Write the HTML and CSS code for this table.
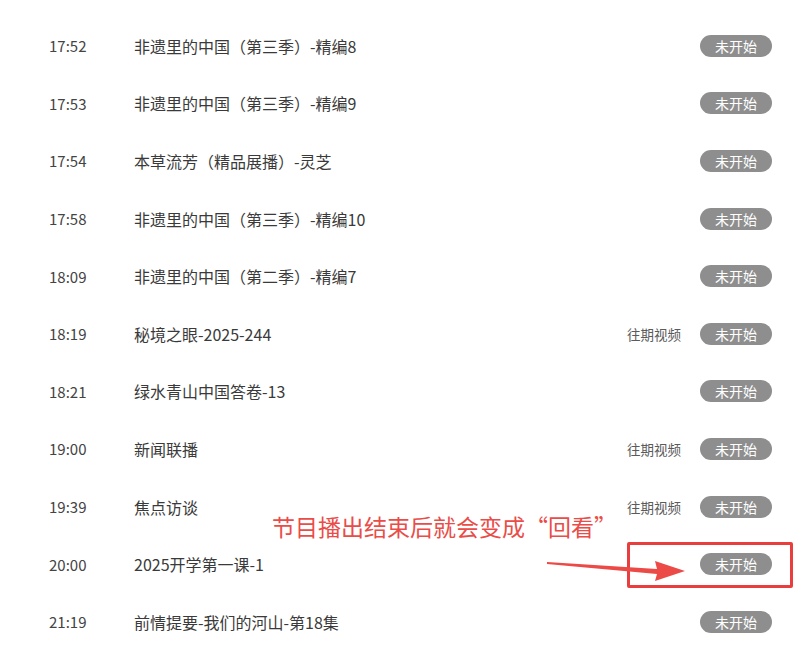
FILE: index.html
```html
<!DOCTYPE html>
<html lang="zh-CN">
<head>
<meta charset="utf-8">
<title>节目单</title>
<link rel="stylesheet" href="styles.css">
</head>
<body>
<div class="page">
  <ul class="schedule">
    <li class="row"><span class="time">17:52</span><span class="title">非遗里的中国（第三季）-精编8</span><span class="status">未开始</span></li>
    <li class="row"><span class="time">17:53</span><span class="title">非遗里的中国（第三季）-精编9</span><span class="status">未开始</span></li>
    <li class="row"><span class="time">17:54</span><span class="title">本草流芳（精品展播）-灵芝</span><span class="status">未开始</span></li>
    <li class="row"><span class="time">17:58</span><span class="title">非遗里的中国（第三季）-精编10</span><span class="status">未开始</span></li>
    <li class="row"><span class="time">18:09</span><span class="title">非遗里的中国（第二季）-精编7</span><span class="status">未开始</span></li>
    <li class="row"><span class="time">18:19</span><span class="title">秘境之眼-2025-244</span><span class="past">往期视频</span><span class="status">未开始</span></li>
    <li class="row"><span class="time">18:21</span><span class="title">绿水青山中国答卷-13</span><span class="status">未开始</span></li>
    <li class="row"><span class="time">19:00</span><span class="title">新闻联播</span><span class="past">往期视频</span><span class="status">未开始</span></li>
    <li class="row"><span class="time">19:39</span><span class="title">焦点访谈</span><span class="past">往期视频</span><span class="status">未开始</span></li>
    <li class="row"><span class="time">20:00</span><span class="title">2025开学第一课-1</span><span class="status">未开始</span></li>
    <li class="row"><span class="time">21:19</span><span class="title">前情提要-我们的河山-第18集</span><span class="status">未开始</span></li>
  </ul>

  <div class="note">节目播出结束后就会变成“回看”</div>
  <div class="note-box"></div>
  <svg class="note-arrow" width="150" height="30" viewBox="0 0 150 30">
    <polygon points="0,3 110,10 108,2 138,12 108,22 110,15 0,5" fill="#ec4a46"/>
  </svg>
</div>
</body>
</html>
```
FILE: styles.css
```css
* { box-sizing: border-box; }
html, body {
  margin: 0;
  padding: 0;
  background: #ffffff;
}
body {
  font-family: "Noto Sans CJK SC", "Noto Sans", sans-serif;
  color: #3a3a3a;
}
.page {
  position: relative;
  width: 800px;
  height: 648px;
  overflow: hidden;
}
.schedule {
  list-style: none;
  margin: 0;
  padding: 17px 28px 0 49px;
}
.row {
  display: flex;
  align-items: center;
  height: 57.6px;
}
.time {
  width: 85px;
  font-size: 15px;
  color: #444444;
  flex: none;
}
.title {
  flex: 1;
  font-size: 16px;
  color: #3a3a3a;
}
.past {
  font-size: 13.5px;
  color: #5a5a5a;
  margin-right: 19px;
}
.status {
  flex: none;
  width: 72px;
  height: 22px;
  line-height: 22px;
  border-radius: 11px;
  background: #8e8e8e;
  color: #ffffff;
  font-size: 14px;
  text-align: center;
}
.note {
  position: absolute;
  left: 272px;
  top: 510px;
  font-size: 23px;
  line-height: 32px;
  color: #ea4c48;
  white-space: nowrap;
}
.note-box {
  position: absolute;
  left: 627px;
  top: 542px;
  width: 166px;
  height: 46px;
  border: 3px solid #ea3e3e;
  border-radius: 2px;
}
.note-arrow {
  position: absolute;
  left: 547px;
  top: 559px;
}
```
